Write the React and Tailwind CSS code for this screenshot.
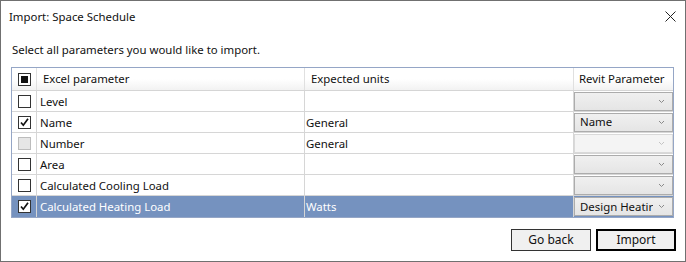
import React from 'react';

const rows = [
  { name: 'Level', units: '', check: 'off', revit: '', combo: 'on' },
  { name: 'Name', units: 'General', check: 'on', revit: 'Name', combo: 'on' },
  { name: 'Number', units: 'General', check: 'disabled', revit: '', combo: 'disabled' },
  { name: 'Area', units: '', check: 'off', revit: '', combo: 'on' },
  { name: 'Calculated Cooling Load', units: '', check: 'off', revit: '', combo: 'on' },
  { name: 'Calculated Heating Load', units: 'Watts', check: 'on', revit: 'Design Heatir', combo: 'on', selected: true },
];

const CheckBox = ({ state }) => {
  if (state === 'disabled') {
    return <div className="w-[13px] h-[13px] border border-[#bcbcbc] bg-[#e6e6e6]" />;
  }
  return (
    <div className="w-[13px] h-[13px] border border-[#333333] bg-white flex items-center justify-center">
      {state === 'on' && (
        <svg width="11" height="11" viewBox="0 0 11 11">
          <polyline points="2,5.5 4.3,8.2 9,1.8" fill="none" stroke="#111" strokeWidth="1.7" />
        </svg>
      )}
      {state === 'mixed' && <div className="w-[7px] h-[7px] bg-[#111]" />}
    </div>
  );
};

const Chevron = ({ color }) => (
  <svg width="7" height="5" viewBox="0 0 7 5" className="shrink-0">
    <polyline points="1,1 3.5,3.5 6,1" fill="none" stroke={color} strokeWidth="1" />
  </svg>
);

const Combo = ({ value, state }) => {
  const disabled = state === 'disabled';
  return (
    <div
      className={
        'h-[19px] w-[99px] flex items-center justify-between gap-[4px] pl-[5px] pr-[7px] border ' +
        (disabled
          ? 'border-[#d9d9d9] bg-[#f4f4f4]'
          : 'border-[#acacac] bg-gradient-to-b from-[#f0f0f0] to-[#e5e5e5]')
      }
    >
      <span className="text-[#111] overflow-hidden whitespace-nowrap">{value}</span>
      <Chevron color={disabled ? '#c4c4c4' : '#8a8a8a'} />
    </div>
  );
};

export default function App() {
  return (
    <div
      className="w-[686px] h-[262px] bg-white border border-[#707070] flex flex-col text-[11.4px] text-[#111] overflow-hidden"
      style={{ fontFamily: '"Noto Sans", "Open Sans", sans-serif' }}
    >
      {/* Title bar */}
      <div className="h-[31px] flex items-center justify-between pl-[8px] pr-[9px] shrink-0">
        <span>Import: Space Schedule</span>
        <svg width="11" height="11" viewBox="0 0 11 11">
          <path d="M0.5 0.5 L10.5 10.5 M10.5 0.5 L0.5 10.5" stroke="#222" strokeWidth="1" />
        </svg>
      </div>

      <div className="pl-[10px] flex flex-col">
        <div className="mt-[10px] h-[16px] leading-[16px] pl-[1px]">
          Select all parameters you would like to import.
        </div>

        {/* Table */}
        <div className="mt-[9px] w-[663px] border border-[#95a6c6] flex flex-col">
          <div className="h-[23px] flex border-b border-[#d5d5d5] bg-gradient-to-b from-white from-50% to-[#f2f2f2]">
            <div className="w-[25px] flex items-center justify-center border-r border-[#e0e0e0] pl-[1px]">
              <CheckBox state="mixed" />
            </div>
            <div className="w-[268px] flex items-center pl-[6px] border-r border-[#e0e0e0]">Excel parameter</div>
            <div className="w-[269px] flex items-center pl-[6px] border-r border-[#e0e0e0]">Expected units</div>
            <div className="flex-1 flex items-center pl-[5px]">Revit Parameter</div>
          </div>

          {rows.map((r, i) => (
            <div
              key={r.name}
              className={
                'h-[21px] flex ' +
                (i < rows.length - 1 ? 'border-b border-[#d6d6d6] ' : '') +
                (r.selected ? 'bg-[#7592bf] text-white' : 'bg-white')
              }
            >
              <div className="w-[25px] flex items-center justify-center border-r border-[#d6d6d6] pl-[1px]">
                <CheckBox state={r.check} />
              </div>
              <div className="w-[268px] flex items-center pt-[1px] pl-[3px] border-r border-[#d6d6d6]">{r.name}</div>
              <div className="w-[269px] flex items-center pt-[1px] pl-[1px] border-r border-[#d6d6d6]">{r.units}</div>
              <div className="flex-1 flex items-center">
                <Combo value={r.revit} state={r.combo} />
              </div>
            </div>
          ))}
        </div>

        {/* Buttons */}
        <div className="mt-[11px] w-[665px] flex justify-end gap-[5px]">
          <button className="w-[80px] h-[22px] border border-[#333] bg-[#f0f0f0] text-[12px] text-[#111]">
            Go back
          </button>
          <button className="w-[80px] h-[22px] border-2 border-[#000] bg-[#f0f0f0] text-[12px] text-[#111]">
            Import
          </button>
        </div>
      </div>
    </div>
  );
}
